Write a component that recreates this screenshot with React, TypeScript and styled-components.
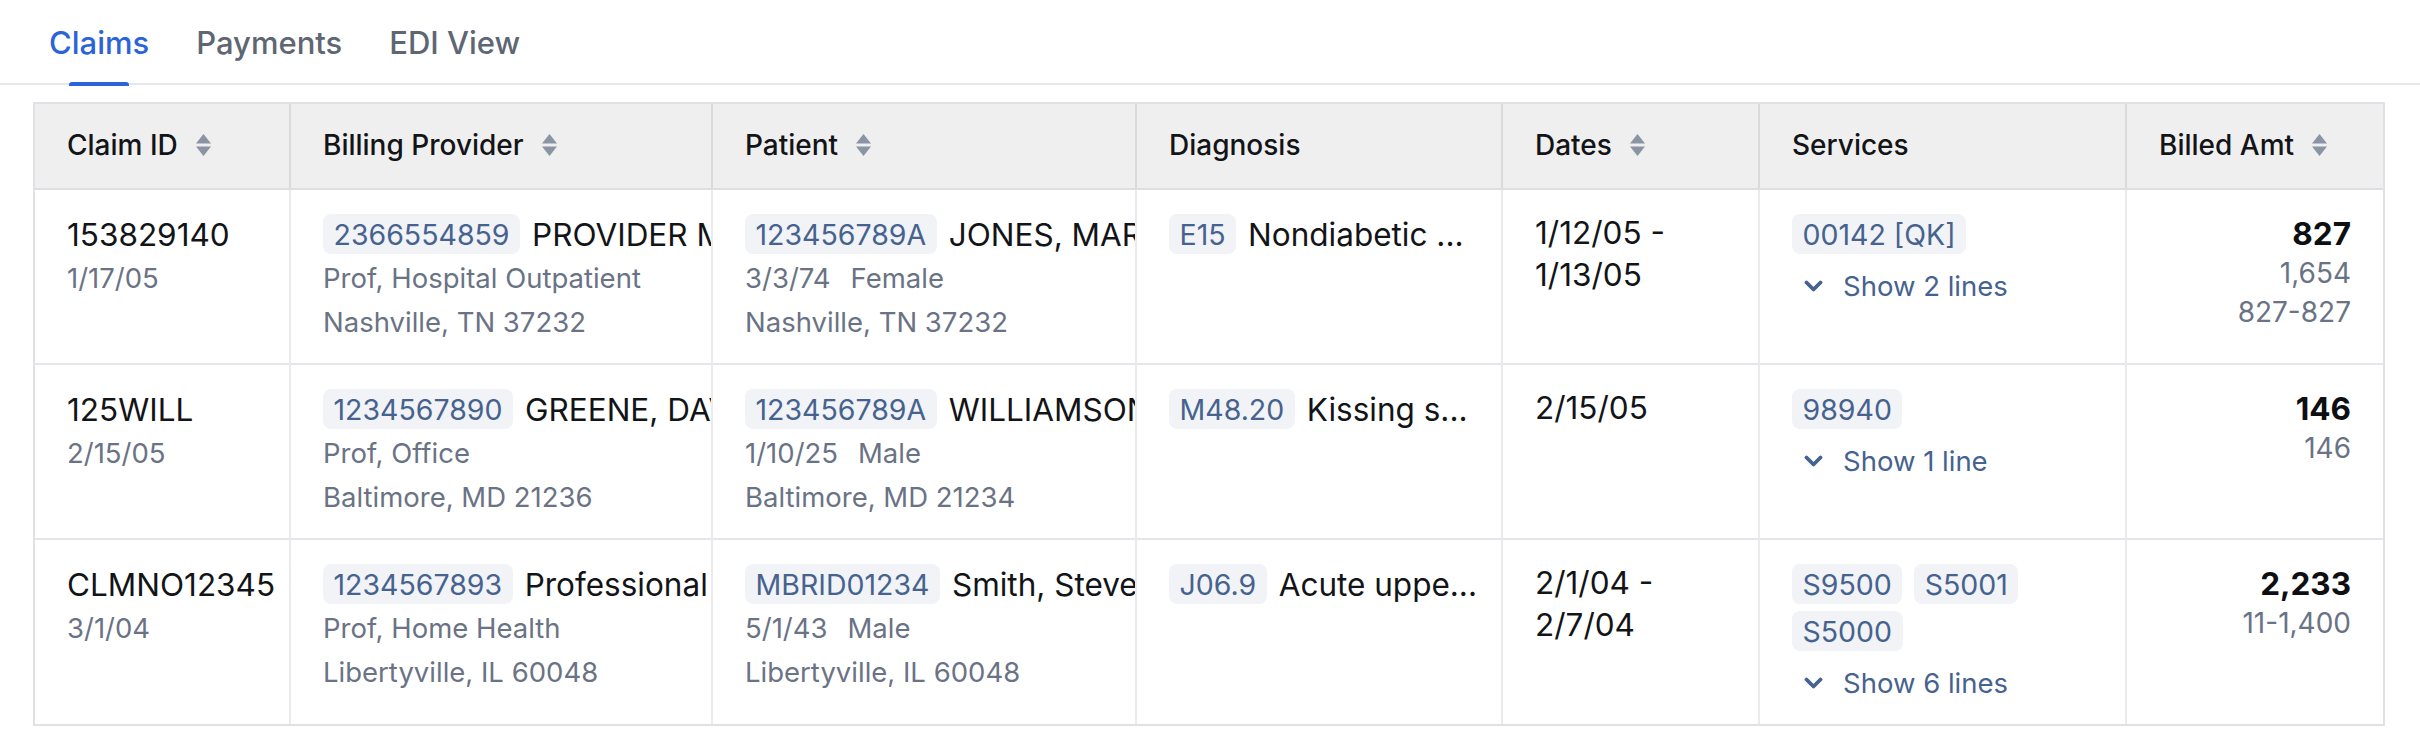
import React from "react";
import styled, { createGlobalStyle, css } from "styled-components";

const GlobalStyle = createGlobalStyle`
  *, *::before, *::after { box-sizing: border-box; }
  html, body { margin: 0; padding: 0; background: #ffffff; }
  body {
    font-family: Inter, "Noto Sans", "Liberation Sans", sans-serif;
    color: #121417;
    -webkit-font-smoothing: antialiased;
  }
`;

const Page = styled.div`
  width: 2420px;
  min-height: 750px;
  background: #ffffff;
`;

const TabBar = styled.nav`
  display: flex;
  gap: 47px;
  padding: 25px 0 0 49px;
  border-bottom: 2px solid #e6e8eb;
`;

const Tab = styled.div<{ $active?: boolean }>`
  position: relative;
  font-size: 31px;
  line-height: 36px;
  font-weight: 500;
  padding-bottom: 22px;
  color: ${(p) => (p.$active ? "#2b63d9" : "#5e6674")};
  cursor: pointer;
  ${(p) =>
    p.$active &&
    css`
      &::after {
        content: "";
        position: absolute;
        left: 50%;
        bottom: -3px;
        width: 60px;
        height: 4px;
        transform: translateX(-50%);
        background: #2b63d9;
        border-radius: 3px 3px 0 0;
      }
    `}
`;

const TableFrame = styled.div`
  margin: 17px 35px 0 33px;
  border: 2px solid #dfe1e5;
`;

const Table = styled.table`
  width: 100%;
  table-layout: fixed;
  border-collapse: separate;
  border-spacing: 0;
`;

const HeadCell = styled.th<{ $w: number }>`
  width: ${(p) => p.$w}px;
  height: 86px;
  padding: 0 32px 2px;
  background: #efefef;
  border-bottom: 2px solid #dcdee2;
  text-align: left;
  vertical-align: middle;
  font-size: 28px;
  line-height: 36px;
  font-weight: 500;
  color: #121417;
  white-space: nowrap;
  & + & {
    border-left: 2px solid #dadada;
  }
`;

const HeadLabel = styled.span`
  display: inline-flex;
  align-items: center;
  gap: 18px;
`;

const Row = styled.tr`
  & + & > td {
    border-top: 2px solid #e4e6e9;
  }
`;

const Cell = styled.td`
  padding: 0;
  vertical-align: top;
  & + & {
    border-left: 2px solid #ebebed;
  }
`;

const CellBody = styled.div<{ $align?: "left" | "right" }>`
  padding: 24px 32px 19px;
  overflow: hidden;
  text-align: ${(p) => p.$align ?? "left"};
`;

const PrimaryLine = styled.div`
  display: flex;
  align-items: center;
  gap: 12px;
  height: 40px;
  margin-right: -32px;
  font-size: 31.5px;
  white-space: nowrap;
`;

const PrimaryText = styled.span`
  flex: 0 1 auto;
  min-width: 0;
  overflow: hidden;
  white-space: nowrap;
  color: #121417;
`;

const Code = styled.span`
  display: inline-flex;
  align-items: center;
  flex-shrink: 0;
  height: 40px;
  padding: 0 10.5px;
  border-radius: 8px;
  background: #f1f3f6;
  color: #46628f;
  font-size: 28.5px;
  white-space: nowrap;
`;

const SubLines = styled.div`
  margin-top: 2px;
`;

const SubLine = styled.div`
  display: flex;
  gap: 20px;
  font-size: 27.5px;
  line-height: 44px;
  color: #6a7385;
  white-space: nowrap;
`;

const DateRange = styled.div`
  margin-top: -2px;
  font-size: 31.5px;
  line-height: 42px;
  color: #121417;
`;

const ServiceCodes = styled.div`
  display: flex;
  flex-wrap: wrap;
  gap: 7px 12px;
`;

const ShowLines = styled.button`
  display: flex;
  align-items: center;
  gap: 20px;
  margin-top: 10px;
  padding: 0 0 0 12px;
  border: none;
  background: none;
  font-family: inherit;
  font-size: 27.5px;
  line-height: 44px;
  color: #46628f;
  cursor: pointer;
`;

const AmountMain = styled.div`
  font-size: 31.5px;
  line-height: 40px;
  font-weight: 700;
  color: #0d0f12;
`;

const AmountSub = styled.div`
  font-size: 28px;
  line-height: 39px;
  color: #6a7385;
`;

const SortIcon = () => (
  <svg width="15" height="22" viewBox="0 0 15 22" aria-hidden="true">
    <polygon points="7.5,0 15,9.5 0,9.5" fill="#8b94a3" />
    <polygon points="0,12.5 15,12.5 7.5,22" fill="#8b94a3" />
  </svg>
);

const Chevron = () => (
  <svg width="19" height="12" viewBox="0 0 19 12" aria-hidden="true">
    <path
      d="M2.5 2.5 L9.5 9.5 L16.5 2.5"
      fill="none"
      stroke="#46628f"
      strokeWidth="3.8"
      strokeLinecap="round"
      strokeLinejoin="round"
    />
  </svg>
);

type Col = { label: string; width: number; sortable: boolean };

const columns: Col[] = [
  { label: "Claim ID", width: 254, sortable: true },
  { label: "Billing Provider", width: 422, sortable: true },
  { label: "Patient", width: 424, sortable: true },
  { label: "Diagnosis", width: 366, sortable: false },
  { label: "Dates", width: 257, sortable: true },
  { label: "Services", width: 367, sortable: false },
  { label: "Billed Amt", width: 258, sortable: true },
];

type Claim = {
  id: string;
  received: string;
  providerNpi: string;
  providerName: string;
  providerType: string;
  providerCity: string;
  memberId: string;
  patientName: string;
  dob: string;
  sex: string;
  patientCity: string;
  dxCode: string;
  dxText: string;
  dates: string;
  services: string[];
  lines: string;
  billed: string;
  subAmounts: string[];
};

const claims: Claim[] = [
  {
    id: "153829140",
    received: "1/17/05",
    providerNpi: "2366554859",
    providerName: "PROVIDER MEDICAL GROUP",
    providerType: "Prof, Hospital Outpatient",
    providerCity: "Nashville, TN 37232",
    memberId: "123456789A",
    patientName: "JONES, MARY",
    dob: "3/3/74",
    sex: "Female",
    patientCity: "Nashville, TN 37232",
    dxCode: "E15",
    dxText: "Nondiabetic ...",
    dates: "1/12/05 - 1/13/05",
    services: ["00142 [QK]"],
    lines: "Show 2 lines",
    billed: "827",
    subAmounts: ["1,654", "827-827"],
  },
  {
    id: "125WILL",
    received: "2/15/05",
    providerNpi: "1234567890",
    providerName: "GREENE, DAVID",
    providerType: "Prof, Office",
    providerCity: "Baltimore, MD 21236",
    memberId: "123456789A",
    patientName: "WILLIAMSON, JOHN",
    dob: "1/10/25",
    sex: "Male",
    patientCity: "Baltimore, MD 21234",
    dxCode: "M48.20",
    dxText: "Kissing s...",
    dates: "2/15/05",
    services: ["98940"],
    lines: "Show 1 line",
    billed: "146",
    subAmounts: ["146"],
  },
  {
    id: "CLMNO12345",
    received: "3/1/04",
    providerNpi: "1234567893",
    providerName: "Professional Services",
    providerType: "Prof, Home Health",
    providerCity: "Libertyville, IL 60048",
    memberId: "MBRID01234",
    patientName: "Smith, Steven",
    dob: "5/1/43",
    sex: "Male",
    patientCity: "Libertyville, IL 60048",
    dxCode: "J06.9",
    dxText: "Acute uppe...",
    dates: "2/1/04 - 2/7/04",
    services: ["S9500", "S5001", "S5000"],
    lines: "Show 6 lines",
    billed: "2,233",
    subAmounts: ["11-1,400"],
  },
];

export default function App() {
  return (
    <Page>
      <GlobalStyle />
      <TabBar>
        <Tab $active>Claims</Tab>
        <Tab>Payments</Tab>
        <Tab>EDI View</Tab>
      </TabBar>
      <TableFrame>
        <Table>
          <thead>
            <tr>
              {columns.map((c) => (
                <HeadCell key={c.label} $w={c.width}>
                  <HeadLabel>
                    {c.label}
                    {c.sortable && <SortIcon />}
                  </HeadLabel>
                </HeadCell>
              ))}
            </tr>
          </thead>
          <tbody>
            {claims.map((c) => (
              <Row key={c.id}>
                <Cell>
                  <CellBody>
                    <PrimaryLine>
                      <PrimaryText>{c.id}</PrimaryText>
                    </PrimaryLine>
                    <SubLines>
                      <SubLine>{c.received}</SubLine>
                    </SubLines>
                  </CellBody>
                </Cell>
                <Cell>
                  <CellBody>
                    <PrimaryLine>
                      <Code>{c.providerNpi}</Code>
                      <PrimaryText>{c.providerName}</PrimaryText>
                    </PrimaryLine>
                    <SubLines>
                      <SubLine>{c.providerType}</SubLine>
                      <SubLine>{c.providerCity}</SubLine>
                    </SubLines>
                  </CellBody>
                </Cell>
                <Cell>
                  <CellBody>
                    <PrimaryLine>
                      <Code>{c.memberId}</Code>
                      <PrimaryText>{c.patientName}</PrimaryText>
                    </PrimaryLine>
                    <SubLines>
                      <SubLine>
                        <span>{c.dob}</span>
                        <span>{c.sex}</span>
                      </SubLine>
                      <SubLine>{c.patientCity}</SubLine>
                    </SubLines>
                  </CellBody>
                </Cell>
                <Cell>
                  <CellBody>
                    <PrimaryLine>
                      <Code>{c.dxCode}</Code>
                      <PrimaryText>{c.dxText}</PrimaryText>
                    </PrimaryLine>
                  </CellBody>
                </Cell>
                <Cell>
                  <CellBody>
                    <DateRange>{c.dates}</DateRange>
                  </CellBody>
                </Cell>
                <Cell>
                  <CellBody>
                    <ServiceCodes>
                      {c.services.map((s) => (
                        <Code key={s}>{s}</Code>
                      ))}
                    </ServiceCodes>
                    <ShowLines type="button">
                      <Chevron />
                      {c.lines}
                    </ShowLines>
                  </CellBody>
                </Cell>
                <Cell>
                  <CellBody $align="right">
                    <AmountMain>{c.billed}</AmountMain>
                    {c.subAmounts.map((a) => (
                      <AmountSub key={a}>{a}</AmountSub>
                    ))}
                  </CellBody>
                </Cell>
              </Row>
            ))}
          </tbody>
        </Table>
      </TableFrame>
    </Page>
  );
}
